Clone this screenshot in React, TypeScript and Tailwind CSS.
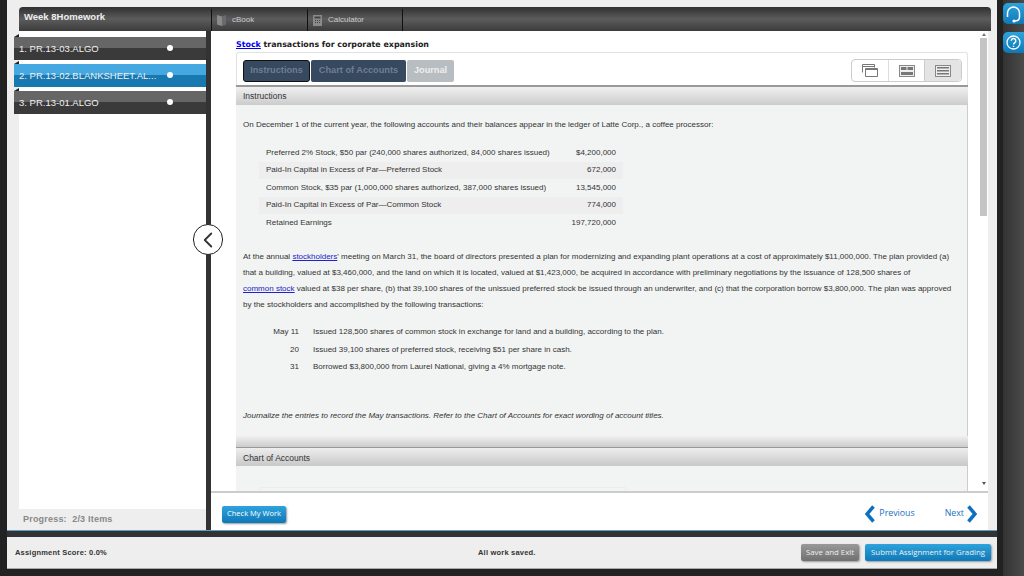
import { ChevronLeft } from 'lucide-react'

const stocks = [
    { name: 'Preferred 2% Stock, $50 par (240,000 shares authorized, 84,000 shares issued)', value: '$4,200,000', alt: false },
    { name: 'Paid-In Capital in Excess of Par—Preferred Stock', value: '672,000', alt: true },
    { name: 'Common Stock, $35 par (1,000,000 shares authorized, 387,000 shares issued)', value: '13,545,000', alt: false },
    { name: 'Paid-In Capital in Excess of Par—Common Stock', value: '774,000', alt: true },
    { name: 'Retained Earnings', value: '197,720,000', alt: false },
]

const transactions = [
    { date: 'May 11', text: 'Issued 128,500 shares of common stock in exchange for land and a building, according to the plan.' },
    { date: '20', text: 'Issued 39,100 shares of preferred stock, receiving $51 per share in cash.' },
    { date: '31', text: 'Borrowed $3,800,000 from Laurel National, giving a 4% mortgage note.' },
]

const items = [
    { label: '1. PR.13-03.ALGO', active: false },
    { label: '2. PR.13-02.BLANKSHEET.AL...', active: true },
    { label: '3. PR.13-01.ALGO', active: false },
]

function SideItem({ label, active }: { label: string; active: boolean }) {
    return (
        <div className={`relative -ml-[5px] flex h-[23px] w-[192px] items-center justify-between whitespace-nowrap pl-[5px] pr-[33px] text-[9.5px] text-[#f0f0f0] ${active ? 'bg-[linear-gradient(#45a8e0_0%,#45a8e0_50%,#1878b0_50%,#1878b0_100%)]' : 'bg-[linear-gradient(#666_0%,#666_50%,#3a3a3a_50%,#3a3a3a_100%)]'}`}>
            <div className="absolute left-0 top-[-3px] h-0 w-0 border-b-[3px] border-l-[5px] border-b-[#222] border-l-transparent" />
            <span className="pt-[1px]">{label}</span>
            <span className="mb-[2px] h-[6px] w-[6px] rounded-full bg-white" />
        </div>
    )
}

export default function App() {
    return (
        <div className="flex h-[576px] w-[1024px] overflow-hidden bg-[#222] font-['Liberation_Sans',Arial,sans-serif]">
            <div className="ml-[7px] flex h-[569px] w-[990px] shrink-0 flex-col bg-[#eee]">
                <div className="ml-[12px] mt-[7px] flex h-[24px] w-[972px] shrink-0 rounded-t-[4px] bg-[linear-gradient(#303030,#5c5c5c_50%,#3c3c3c)]">
                    <div className="w-[192px] pl-[5px] pt-[3px] text-[9.5px] font-bold text-[#eee]">Week 8Homework</div>
                    <div className="mt-[2px] flex h-[22px] w-[96px] items-center gap-[6px] border-l border-[#111] pl-[5px] text-[8px] text-[#ccc]">
                        <svg width="9" height="12" viewBox="0 0 9 12"><path d="M0 1l5 1.500V12L0 10.500z" fill="#8a8a8a" /><path d="M5 2.500L9 1v9.500L5 12z" fill="#6a6a6a" /></svg>
                        cBook
                    </div>
                    <div className="mt-[2px] flex h-[22px] w-[96px] items-center gap-[6px] border-x border-[#111] pl-[5px] text-[8px] text-[#ccc]">
                        <svg width="9" height="11" viewBox="0 0 9 11"><path d="M0 0h9v11H0z" fill="#8a8a8a" /><path d="M1.500 1.500h6v2h-6zM2 5h1v1H2zM4 5h1v1H4zM6 5h1v1H6zM2 7h1v1H2zM4 7h1v1H4zM6 7h1v1H6z" fill="#444" /></svg>
                        Calculator
                    </div>
                </div>

                <div className="ml-[12px] flex h-[499px] w-[972px] shrink-0">
                    <div className="flex w-[187px] shrink-0 flex-col">
                        <div className="flex h-[478px] flex-col gap-[4px] bg-white pt-[6px]">
                            {items.map((item) => (
                                <SideItem key={item.label} label={item.label} active={item.active} />
                            ))}
                        </div>
                        <div className="pl-[4px] pt-[4px] text-[9px] font-bold tracking-[0.2px] text-[#888]">Progress:&nbsp; 2/3 Items</div>
                    </div>

                    <div className="relative w-[5px] shrink-0 bg-[#333]">
                        <div className="absolute left-[-13px] top-[193px] flex h-[31px] w-[30px] items-center justify-center rounded-full border border-[#222] bg-white">
                            <ChevronLeft size={26} strokeWidth={1.7} color="#333" />
                        </div>
                    </div>

                    <div className="mr-[3px] flex min-w-0 flex-1 flex-col bg-white">
                        <div className="flex h-[460px] shrink-0 overflow-hidden">
                            <div className="w-[769px] shrink-0 pl-[25px]">
                                <div className="pt-[8px] font-['DejaVu_Sans',sans-serif] text-[7.900px] font-bold leading-[11px] text-[#222]">
                                    <span className="text-[#0000ee] underline">Stock</span> transactions for corporate expansion
                                </div>
                                <div className="mt-[2px] flex h-[33px] w-[732px] items-center justify-between rounded-t-[3px] border border-b-0 border-[#e2e2e2] pl-[6px] pr-[5px] pt-[3px]">
                                    <div className="flex gap-px text-[9.200px] font-bold">
                                        <div className="flex h-[22px] w-[67px] items-center justify-center rounded-[3px] border border-[#111] bg-[#36495f] text-[#6d7f92]">Instructions</div>
                                        <div className="flex h-[22px] w-[95px] items-center justify-center rounded-[2px] bg-[#36495f] text-[#6d7f92]">Chart of Accounts</div>
                                        <div className="flex h-[22px] w-[47px] items-center justify-center rounded-[2px] bg-[#b8bdc2] text-[#eee]">Journal</div>
                                    </div>
                                    <div className="flex h-[23px] w-[111px] rounded-[4px] border border-[#ccc]">
                                        <div className="flex flex-1 items-center justify-center border-r border-[#ddd]">
                                            <svg width="16" height="13" viewBox="0 0 16 13" fill="none" stroke="#777"><path d="M.5 8.500V.5h12v3" /><path d="M.5 2.500h12" /><path d="M3.500 4.500h12v8h-12z" /><path d="M3.500 5.500h12" /></svg>
                                        </div>
                                        <div className="flex flex-1 items-center justify-center border-r border-[#ccc]">
                                            <svg width="16" height="12" viewBox="0 0 16 12"><path d="M0 0h16v12H0z" fill="#888" /><path d="M1 1h14v10H1z" fill="#eee" /><path d="M2 2h5.500v3H2zM8.500 2H14v3H8.500zM2 7h12v3H2z" fill="#777" /></svg>
                                        </div>
                                        <div className="flex flex-1 items-center justify-center rounded-r-[4px] bg-[#e4e4e4]">
                                            <svg width="16" height="12" viewBox="0 0 16 12"><path d="M0 0h16v12H0z" fill="#888" /><path d="M1 1h14v10H1z" fill="#eee" /><path d="M2 2h12v1.500H2zM2 5h12v1.500H2zM2 8h12v1.500H2z" fill="#777" /></svg>
                                        </div>
                                    </div>
                                </div>

                                <div className="flex h-[20px] w-[732px] items-center border-t-2 border-[#999] bg-[linear-gradient(#f0f0f0,#ccc)] pl-[7px] pt-[1px] text-[8.500px] text-[#333]">Instructions</div>

                                <div className="h-[331px] w-[732px] border-r border-[#ccc] bg-[#f2f4f4] pl-[7px] text-[8px] text-[#333]">
                                    <div className="pt-[10px] leading-[20px]">On December 1 of the current year, the following accounts and their balances appear in the ledger of Latte Corp., a coffee processor:</div>
                                    <div className="ml-[16px] mt-[9px] w-[364px]">
                                        {stocks.map((row) => (
                                            <div key={row.name} className={`flex h-[17.500px] items-center justify-between pl-[7px] pr-[7px] ${row.alt ? 'bg-[#eee]' : ''}`}>
                                                <span>{row.name}</span>
                                                <span>{row.value}</span>
                                            </div>
                                        ))}
                                    </div>
                                    <div className="mt-[17px] whitespace-nowrap leading-[16px]">
                                        At the annual <span className="text-[#2222cc] underline">stockholders</span>' meeting on March 31, the board of directors presented a plan for modernizing and expanding plant operations at a cost of approximately $11,000,000. The plan provided (a)<br />
                                        that a building, valued at $3,460,000, and the land on which it is located, valued at $1,423,000, be acquired in accordance with preliminary negotiations by the issuance of 128,500 shares of<br />
                                        <span className="text-[#2222cc] underline">common stock</span> valued at $38 per share, (b) that 39,100 shares of the unissued preferred stock be issued through an underwriter, and (c) that the corporation borrow $3,800,000. The plan was approved<br />
                                        by the stockholders and accomplished by the following transactions:
                                    </div>
                                    <div className="mt-[11px] flex flex-col">
                                        {transactions.map((row) => (
                                            <div key={row.date} className="flex h-[17.500px] items-center">
                                                <span className="w-[56px] text-right">{row.date}</span>
                                                <span className="ml-[14px]">{row.text}</span>
                                            </div>
                                        ))}
                                    </div>
                                    <div className="mt-[34px] italic">Journalize the entries to record the May transactions. Refer to the Chart of Accounts for exact wording of account titles.</div>
                                </div>

                                <div className="h-[12px] w-[732px] border-b border-[#999] bg-[linear-gradient(#f0f0f0,#ccc)]" />
                                <div className="flex h-[18px] w-[732px] items-center bg-[linear-gradient(#eee,#c8c8c8)] pl-[7px] pt-[3px] text-[8.500px] text-[#333]">Chart of Accounts</div>
                                <div className="h-[30px] w-[732px] border-r border-[#ccc] bg-[#f2f4f4] pl-[24px] pt-[21px]">
                                    <div className="h-[9px] w-[366px] border border-[#ececec]" />
                                </div>
                            </div>

                            <div className="flex w-[7px] shrink-0 flex-col items-center pt-[2px]">
                                <div className="h-0 w-0 border-x-[2px] border-b-[3px] border-x-transparent border-b-[#777]" />
                                <div className="mt-[2px] h-[178px] w-[7px] bg-[#c4c4c4]" />
                                <div className="mt-auto mb-[6px] h-0 w-0 border-x-[2px] border-t-[3px] border-x-transparent border-t-[#555]" />
                            </div>
                        </div>

                        <div className="flex h-[39px] items-center justify-between border-t-2 border-[#ccc] pl-[11px] pr-[11px]">
                            <div className="mt-[5px] flex h-[17px] w-[64px] items-center justify-center rounded-[2px] bg-[linear-gradient(#2ea3dc,#0f78b8)] font-['Open_Sans',sans-serif] text-[7.500px] text-white shadow-[1px_1px_2px_#999]">Check My Work</div>
                            <div className="mt-[4px] flex items-center font-['Open_Sans',sans-serif] text-[8.800px] text-[#1a70c0]">
                                <svg width="10" height="18" viewBox="0 0 10 18" fill="none" stroke="#0f70c0" strokeWidth="3.500"><path d="M8.500 1.500L2 9l6.500 7.500" /></svg>
                                <span className="ml-[4px]">Previous</span>
                                <span className="ml-[30px]">Next</span>
                                <svg className="ml-[3px]" width="10" height="18" viewBox="0 0 10 18" fill="none" stroke="#0f70c0" strokeWidth="3.500"><path d="M1.500 1.500L8 9l-6.500 7.500" /></svg>
                            </div>
                        </div>
                    </div>
                </div>

                <div className="h-[7px] shrink-0 border-t border-[#5a9fc8] bg-[#333]" />

                <div className="flex flex-1 items-center border-b border-[#aaa] pl-[8px] pr-[6px]">
                    <span className="w-[463px] text-[7.500px] font-bold tracking-[0.2px] text-[#333]">Assignment Score: 0.0%</span>
                    <span className="text-[7.500px] font-bold tracking-[0.2px] text-[#333]">All work saved.</span>
                    <div className="ml-auto flex gap-[6px] font-['Open_Sans',sans-serif] text-[7.800px] text-[#eee]">
                        <div className="flex h-[17px] w-[58px] items-center justify-center rounded-[2px] bg-[linear-gradient(#999,#707070)] shadow-[1px_1px_2px_#999]">Save and Exit</div>
                        <div className="flex h-[17px] w-[126px] items-center justify-center rounded-[2px] bg-[linear-gradient(#2ea3dc,#0f78b8)] shadow-[1px_1px_2px_#999]">Submit Assignment for Grading</div>
                    </div>
                </div>
            </div>

            <div className="ml-[6px] flex h-full flex-1 flex-col items-start gap-[8px] bg-[linear-gradient(90deg,#333,#4a4a4a)] pt-[3px]">
                <div className="flex h-[21px] w-[21px] items-center justify-center rounded-l-[5px] bg-[linear-gradient(#2ea3dc,#0f78b8)]">
                    <svg width="17" height="18" viewBox="0 0 17 18" fill="none" stroke="#fff" strokeWidth="1.500"><path d="M2.500 12V8a6 6 0 0 1 12 0v4" /><path d="M14.500 12c0 2.500-2 4-5 4" /><circle cx="9" cy="16" r=".8" fill="#fff" /></svg>
                </div>
                <div className="flex h-[21px] w-[21px] items-center justify-center rounded-l-[5px] bg-[linear-gradient(#2ea3dc,#0f78b8)]">
                    <svg width="15" height="15" viewBox="0 0 15 15" fill="none" stroke="#fff"><circle cx="7.500" cy="7.500" r="6.500" strokeWidth="1.300" /><path d="M5.200 5.800a2.300 2.300 0 1 1 3.400 2c-.8.500-1.100 1-1.100 1.800M7.500 10.700v1.300" strokeWidth="1.400" /></svg>
                </div>
            </div>
        </div>
    )
}
